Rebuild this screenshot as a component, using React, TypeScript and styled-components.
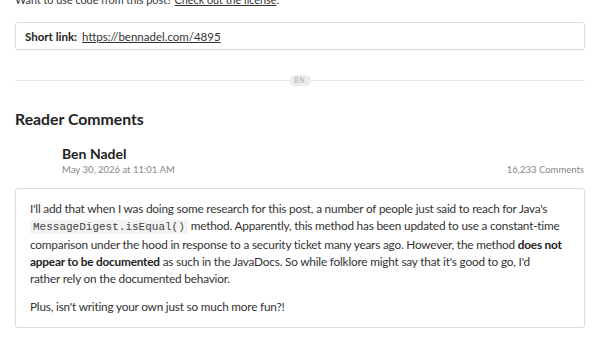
import React from "react";
import styled, { createGlobalStyle } from "styled-components";

const Global = createGlobalStyle`
  html, body { margin: 0; padding: 0; background: #ffffff; }
  body { font-family: Lato, "Noto Sans", sans-serif; color: #222; overflow: hidden; }
`;

const Page = styled.div`
  padding: 0 15px 0 15px;
  width: 570px;
  margin-top: -9px;
`;

const Intro = styled.p`
  margin: 0;
  font-size: 10.8px;
  line-height: 17px;
  color: #333;
  a { color: #333; }
`;

const ShortLinkBox = styled.div`
  margin-top: 14px;
  height: 28px;
  box-sizing: border-box;
  border: 1px solid #dcdcdc;
  border-radius: 3px;
  box-shadow: 0 1px 2px rgba(0,0,0,0.05);
  display: flex;
  align-items: center;
  padding: 0 9px;
  font-size: 11.5px;
  gap: 5px;
`;

const Label = styled.strong`
  font-weight: 700;
  color: #222;
`;

const Link = styled.a`
  color: #333;
  text-decoration: underline;
`;

const Divider = styled.div`
  margin-top: 24px;
  height: 12px;
  display: flex;
  align-items: center;
  &::before, &::after {
    content: "";
    flex: 1 1 0;
    height: 1px;
    background: #e6e6e6;
  }
`;

const Pill = styled.span`
  flex: 0 0 21px;
  height: 11px;
  border-radius: 6px;
  background: #ececec;
  color: #bdbdbd;
  font-size: 6.5px;
  font-weight: 700;
  letter-spacing: 1px;
  display: flex;
  align-items: center;
  justify-content: center;
`;

const Heading = styled.h2`
  margin: 22px 0 0 0;
  font-size: 15.8px;
  line-height: 22px;
  font-weight: 700;
  color: #222;
`;

const CommentHeader = styled.div`
  margin-top: 15px;
  padding-left: 47px;
  display: flex;
  justify-content: space-between;
  align-items: flex-end;
`;

const Author = styled.div`
  display: flex;
  flex-direction: column;
`;

const Name = styled.div`
  font-size: 14px;
  line-height: 18px;
  font-weight: 700;
  color: #222;
`;

const Meta = styled.div`
  font-size: 9.5px;
  line-height: 14px;
  color: #888;
`;

const Count = styled(Meta)`
  margin-right: 1px;
`;

const CommentBox = styled.div`
  margin-top: 11px;
  border: 1px solid #dcdcdc;
  border-radius: 3px;
  box-shadow: 0 1px 2px rgba(0,0,0,0.05);
  padding: 11px 8px 12px 14px;
  font-size: 11.8px;
  letter-spacing: -0.2px;
  line-height: 17px;
  color: #333;
  p { margin: 0; }
  p + p { margin-top: 11px; }
  strong { color: #222; }
`;

const Code = styled.code`
  font-family: "Liberation Mono", monospace;
  font-size: 11px;
  letter-spacing: 0;
  background: #f3f3f3;
  padding: 1px 3px;
  color: #444;
  border-radius: 2px;
`;

export default function App() {
  return (
    <>
      <Global />
      <Page>
        <Intro>
          Want to use code from this post? <a href="#">Check out the license</a>.
        </Intro>
        <ShortLinkBox>
          <Label>Short link:</Label>
          <Link href="#">https://bennadel.com/4895</Link>
        </ShortLinkBox>
        <Divider>
          <Pill>BN</Pill>
        </Divider>
        <Heading>Reader Comments</Heading>
        <CommentHeader>
          <Author>
            <Name>Ben Nadel</Name>
            <Meta>May 30, 2026 at 11:01 AM</Meta>
          </Author>
          <Count>16,233 Comments</Count>
        </CommentHeader>
        <CommentBox>
          <p>
            I'll add that when I was doing some research for this post, a number of people just said to reach for Java's
            <br />
            <Code>MessageDigest.isEqual()</Code> method. Apparently, this method has been updated to use a constant-time
            <br />
            comparison under the hood in response to a security ticket many years ago. However, the method{" "}
            <strong>does not</strong>
            <br />
            <strong>appear to be documented</strong> as such in the JavaDocs. So while folklore might say that it's good to go, I'd
            <br />
            rather rely on the documented behavior.
          </p>
          <p>Plus, isn't writing your own just so much more fun?!</p>
        </CommentBox>
      </Page>
    </>
  );
}
